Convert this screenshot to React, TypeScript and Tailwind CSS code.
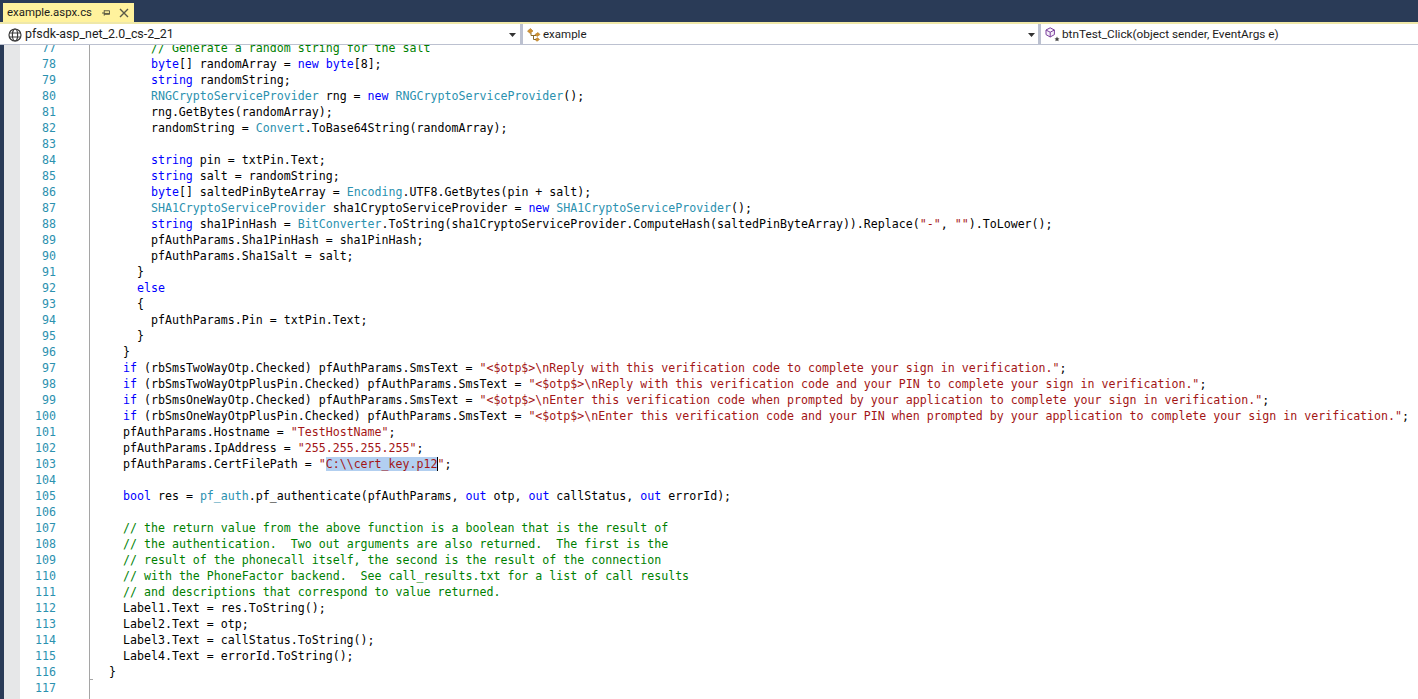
import React from "react";

const code: string[] = [
  "        // Generate a random string for the salt",
  "        byte[] randomArray = new byte[8];",
  "        string randomString;",
  "        RNGCryptoServiceProvider rng = new RNGCryptoServiceProvider();",
  "        rng.GetBytes(randomArray);",
  "        randomString = Convert.ToBase64String(randomArray);",
  "",
  "        string pin = txtPin.Text;",
  "        string salt = randomString;",
  "        byte[] saltedPinByteArray = Encoding.UTF8.GetBytes(pin + salt);",
  "        SHA1CryptoServiceProvider sha1CryptoServiceProvider = new SHA1CryptoServiceProvider();",
  '        string sha1PinHash = BitConverter.ToString(sha1CryptoServiceProvider.ComputeHash(saltedPinByteArray)).Replace("-", "").ToLower();',
  "        pfAuthParams.Sha1PinHash = sha1PinHash;",
  "        pfAuthParams.Sha1Salt = salt;",
  "      }",
  "      else",
  "      {",
  "        pfAuthParams.Pin = txtPin.Text;",
  "      }",
  "    }",
  '    if (rbSmsTwoWayOtp.Checked) pfAuthParams.SmsText = "<$otp$>\\nReply with this verification code to complete your sign in verification.";',
  '    if (rbSmsTwoWayOtpPlusPin.Checked) pfAuthParams.SmsText = "<$otp$>\\nReply with this verification code and your PIN to complete your sign in verification.";',
  '    if (rbSmsOneWayOtp.Checked) pfAuthParams.SmsText = "<$otp$>\\nEnter this verification code when prompted by your application to complete your sign in verification.";',
  '    if (rbSmsOneWayOtpPlusPin.Checked) pfAuthParams.SmsText = "<$otp$>\\nEnter this verification code and your PIN when prompted by your application to complete your sign in verification.";',
  '    pfAuthParams.Hostname = "TestHostName";',
  '    pfAuthParams.IpAddress = "255.255.255.255";',
  '    pfAuthParams.CertFilePath = "C:\\\\cert_key.p12";',
  "",
  "    bool res = pf_auth.pf_authenticate(pfAuthParams, out otp, out callStatus, out errorId);",
  "",
  "    // the return value from the above function is a boolean that is the result of",
  "    // the authentication.  Two out arguments are also returned.  The first is the",
  "    // result of the phonecall itself, the second is the result of the connection",
  "    // with the PhoneFactor backend.  See call_results.txt for a list of call results",
  "    // and descriptions that correspond to value returned.",
  "    Label1.Text = res.ToString();",
  "    Label2.Text = otp;",
  "    Label3.Text = callStatus.ToString();",
  "    Label4.Text = errorId.ToString();",
  "  }",
  "",
];

const tokenRe =
  /(\/\/.*$)|("(?:[^"\\]|\\.)*")|\b(byte|new|string|if|else|bool|out)\b|\b(RNGCryptoServiceProvider|SHA1CryptoServiceProvider|Convert|Encoding|BitConverter|pf_auth)\b/g;

function renderLine(line: string) {
  const parts: React.ReactNode[] = [];
  let last = 0;
  let m: RegExpExecArray | null;
  tokenRe.lastIndex = 0;
  let i = 0;
  while ((m = tokenRe.exec(line))) {
    if (m.index > last) parts.push(line.slice(last, m.index));
    const t = m[0];
    if (m[1]) {
      parts.push(<span key={i++} className="text-[#008000]">{t}</span>);
    } else if (m[2]) {
      const sel = '"C:\\\\cert_key.p12"';
      if (t === sel) {
        parts.push(
          <span key={i++} className="text-[#a31515]">
            "<span className="bg-[#b2cff0]">C:\\cert_key.p12</span>
            <span className="border-l border-black -ml-px">"</span>
          </span>
        );
      } else {
        parts.push(<span key={i++} className="text-[#a31515]">{t}</span>);
      }
    } else if (m[3]) {
      parts.push(<span key={i++} className="text-[#0000ff]">{t}</span>);
    } else {
      parts.push(<span key={i++} className="text-[#2b91af]">{t}</span>);
    }
    last = m.index + t.length;
  }
  if (last < line.length) parts.push(line.slice(last));
  return parts;
}

function Caret() {
  return (
    <svg width="7" height="4" viewBox="0 0 7 4" className="shrink-0">
      <path d="M0 0h7L3.5 4z" fill="#333" />
    </svg>
  );
}

function GlobeIcon() {
  return (
    <svg width="14" height="14" viewBox="0 0 14 14" fill="none" stroke="#3a3a3a" strokeWidth="1.2" className="shrink-0">
      <circle cx="7" cy="7" r="6" />
      <ellipse cx="7" cy="7" rx="2.6" ry="6" />
      <path d="M1 5h12M1 9h12" />
    </svg>
  );
}

function ClassIcon() {
  return (
    <svg width="14" height="14" viewBox="0 0 14 14" className="shrink-0">
      <path d="M0.5 3l3-2.5 2.5 2.5-3 2.5z M8 6.5l3-2 2 2-3 2z M8 11.5l2.5-1.8 2 1.8-2.5 1.8z" fill="#d1902f" stroke="#b07a24" strokeWidth="0.6" />
      <path d="M4 5v2.5h5M6.5 7.5v4h2.5" fill="none" stroke="#8a6a2a" strokeWidth="1" />
    </svg>
  );
}

function MethodIcon() {
  return (
    <svg width="16" height="15" viewBox="0 0 16 15" className="shrink-0">
      <path d="M5.2 0.8L9.4 3V7.6L5.2 10L1 7.6V3Z M1 3L5.2 5.2L9.4 3 M5.2 5.2V10" fill="#f4eef8" stroke="#7a3f9d" strokeWidth="1" />
      <path d="M12 9.6l.8 1.6 1.7.2-1.25 1.2.35 1.7-1.6-.9-1.6.9.35-1.7-1.25-1.2 1.7-.2z" fill="#444" />
    </svg>
  );
}

export default function App() {
  return (
    <div
      className="flex h-[699px] w-[1418px] flex-col overflow-hidden bg-[#2a3b57] text-black"
      style={{ fontFamily: 'Roboto, "Noto Sans", sans-serif' }}
    >
      {/* Tab well */}
      <div className="flex h-[22px] shrink-0 items-end pl-[3px]">
        <div className="flex h-[19px] w-[131px] items-center bg-[#fff29d] pl-[4px] text-[11.4px] text-[#1c1c1c]">
          <span className="w-[84px] shrink-0">example.aspx.cs</span>
          <svg width="8" height="8" viewBox="0 0 9 8" className="ml-[11px]" fill="none" stroke="#4a4a3a" strokeWidth="1">
            <path d="M0 4h2.5M2.5 1v6M2.5 1.5h6v4h-6M2.5 4.5h6" />
          </svg>
          <svg width="10" height="10" viewBox="0 0 10 10" className="ml-[9px]" fill="none" stroke="#5a5a48" strokeWidth="1.4">
            <path d="M1 1l8 8M9 1l-8 8" />
          </svg>
        </div>
      </div>

      {/* Navigation bar */}
      <div className="flex h-[23px] shrink-0 border-t-2 border-b border-t-[#efe8a8] border-b-[#bcc1d0] bg-white pl-[3px] text-[#1c1c1c]">
        <div className="flex h-full flex-1 items-center gap-[3px] pl-[5px] pr-[4px] pt-px text-[12.4px]">
          <GlobeIcon />
          <span className="flex-1">pfsdk-asp_net_2.0_cs-2_21</span>
          <Caret />
        </div>
        <div className="w-[3px] bg-[#bcc1d0]" />
        <div className="flex h-full w-[515px] shrink-0 items-center gap-[2px] pl-[4px] pr-[3px] pt-px text-[11.5px]">
          <ClassIcon />
          <span className="flex-1">example</span>
          <Caret />
        </div>
        <div className="w-[3px] bg-[#bcc1d0]" />
        <div className="flex h-full w-[377px] shrink-0 items-center gap-[1px] pl-[4px] pt-px text-[11.8px]">
          <MethodIcon />
          <span>btnTest_Click(object sender, EventArgs e)</span>
        </div>
      </div>

      {/* Editor */}
      <div className="flex min-h-0 flex-1 overflow-hidden pl-[4px]">
        <div className="w-[16px] shrink-0 bg-[#e6e7e8]" />
        <div className="flex min-w-0 flex-1 overflow-hidden bg-white">
          <div
            className="-mt-[5px] w-[36px] shrink-0 text-right text-[#2b91af]"
            style={{ fontFamily: '"DejaVu Sans Mono", monospace', fontSize: "11.6px", lineHeight: "16px" }}
          >
            {code.map((_, i) => (
              <div key={i} className="h-4">{77 + i}</div>
            ))}
          </div>
          <div className="relative ml-[33px] h-[700px] w-px shrink-0 bg-[#a5a5a5]">
            <div className="absolute left-px top-[634px] h-px w-[3px] bg-[#a5a5a5]" />
          </div>
          <div
            className="-mt-[5px] min-w-0 flex-1 whitespace-pre pl-[5px] text-black"
            style={{ fontFamily: '"DejaVu Sans Mono", monospace', fontSize: "11.62px", lineHeight: "16px" }}
          >
            {code.map((l, i) => (
              <div key={i} className="h-4">{renderLine(l)}</div>
            ))}
          </div>
        </div>
      </div>
    </div>
  );
}
